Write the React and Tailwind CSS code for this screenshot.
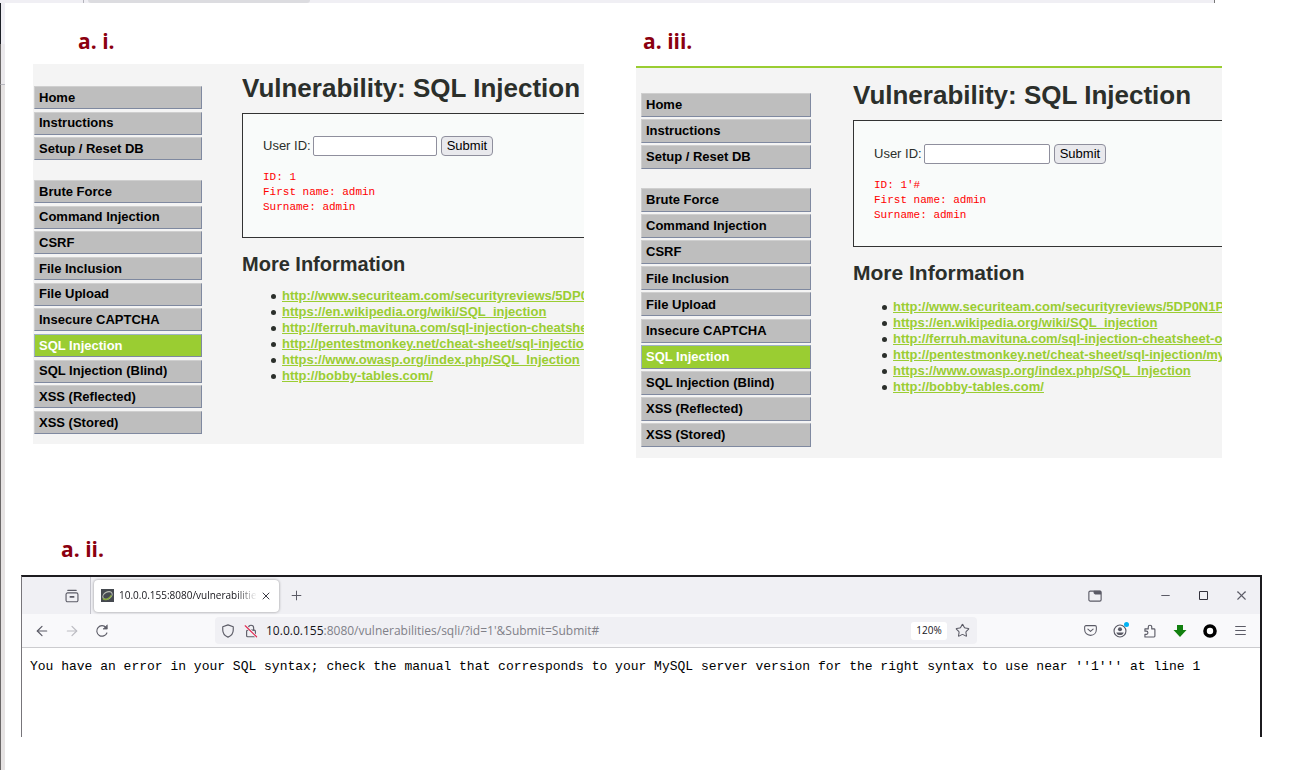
import { ArrowLeft, ArrowRight, Minus, Plus, Star, X } from 'lucide-react';

const pages = ['Home', 'Instructions', 'Setup / Reset DB'];

const attacks = [
  'Brute Force',
  'Command Injection',
  'CSRF',
  'File Inclusion',
  'File Upload',
  'Insecure CAPTCHA',
  'SQL Injection',
  'SQL Injection (Blind)',
  'XSS (Reflected)',
  'XSS (Stored)',
];

const links = [
  'http://www.securiteam.com/securityreviews/5DP0N1P76E.html',
  'https://en.wikipedia.org/wiki/SQL_injection',
  'http://ferruh.mavituna.com/sql-injection-cheatsheet-oku/',
  'http://pentestmonkey.net/cheat-sheet/sql-injection/mysql',
  'https://www.owasp.org/index.php/SQL_Injection',
  'http://bobby-tables.com/',
];

const Label = ({ children, className }) => (
  <h3 className={`font-['Open_Sans',sans-serif] font-bold text-[21px] leading-[30px] text-[#8b0010] ${className}`}>
    {children}
  </h3>
);

const NavList = ({ items, className, itemClass }) => (
  <ul className={`flex flex-col justify-between ${className}`}>
    {items.map((item) => (
      <li key={item}>
        <a
          href="#"
          className={`flex items-center pl-1 border border-r-[#7f89a0] border-b-[#7f89a0] ${itemClass} ${item === 'SQL Injection' ? 'bg-[#9acd32] text-white border-t-[#9fb3c4] border-l-[#9fb3c4]' : 'bg-[#bebebe] text-black border-t-[#cfcfcf] border-l-[#cfcfcf]'}`}
        >
          {item}
        </a>
      </li>
    ))}
  </ul>
);

const Dvwa = ({ id, result, wide }) => (
  <div
    className={`flex overflow-hidden bg-[#f4f4f4] font-['Liberation_Sans',Arial,sans-serif] text-[13px] ${wide ? 'h-[392px] border-t-2 border-[#9acd32] pl-[5px] gap-[42px]' : 'h-[380px] pl-px gap-10'}`}
  >
    <nav className={`shrink-0 font-bold flex flex-col ${wide ? 'w-[170px] pt-[25px] gap-[19px]' : 'w-[168px] pt-[22px] gap-5'}`}>
      <NavList items={pages} className={wide ? 'h-[76px]' : 'h-[74px]'} itemClass={wide ? 'h-6' : 'h-[23px]'} />
      <NavList items={attacks} className={wide ? 'h-[259px]' : 'h-[254px]'} itemClass={wide ? 'h-6' : 'h-[23px]'} />
    </nav>

    <main className={`flex-1 min-w-0 overflow-hidden whitespace-nowrap text-[#2b2f2b] ${wide ? 'pt-[11px]' : 'pt-2'}`}>
      <h1 className="font-bold text-[26px] leading-8 mb-[9px]">Vulnerability: SQL Injection</h1>

      <div className={`border border-r-0 border-[#333] bg-[#f9fbfa] px-5 ${wide ? 'py-[23px]' : 'py-[22px]'}`}>
        <form className="flex items-center" onSubmit={(e) => e.preventDefault()}>
          <label htmlFor={id}>User ID:</label>
          <input
            id={id}
            type="text"
            className={`ml-0.5 h-5 rounded-[2px] border border-[#8f8f9d] bg-white px-1 ${wide ? 'w-[126px]' : 'w-[124px]'}`}
          />
          <button type="submit" className="ml-1 h-5 rounded border border-[#8f8f9d] bg-[#e9e9ed] px-[5px] text-black leading-4">
            Submit
          </button>
        </form>
        <pre className="mt-[14px] font-['Liberation_Mono',monospace] text-[11px] leading-[15px] text-[#ff0000]">
          {`ID: ${result}\nFirst name: admin\nSurname: admin`}
        </pre>
      </div>

      <h2 className={`font-bold leading-7 mt-3 ${wide ? 'text-[21px] mb-3' : 'text-[20px] mb-[10px]'}`}>More Information</h2>
      <ul className="pl-[29px] leading-4">
        {links.map((link) => (
          <li key={link} className="flex items-center gap-[6px] before:w-[5px] before:h-[5px] before:shrink-0 before:rounded-full before:bg-[#2b2f2b]">
            <a href={link} className="font-bold text-[#9acd32] underline">{link}</a>
          </li>
        ))}
      </ul>
    </main>
  </div>
);

const IconButton = ({ label, children, className = 'w-[30px]' }) => (
  <button aria-label={label} className={`h-[30px] shrink-0 flex items-center justify-center text-[#5b5b66] ${className}`}>
    {children}
  </button>
);

const Icon = ({ children, size = 14 }) => (
  <svg width={size} height={size} viewBox="0 0 16 16" fill="none" stroke="currentColor" strokeWidth="1.3" strokeLinecap="round" strokeLinejoin="round" className="shrink-0">
    {children}
  </svg>
);

const TabBar = () => (
  <div className="h-[37px] bg-[#f0f0f4] flex items-center">
    <div className="h-full w-[69px] flex items-center justify-end pr-[3px] border-r border-[#c4c4cc]">
      <IconButton label="Recent browsing">
        <Icon>
          <path d="M3.2 1.6h9.6" />
          <path d="M1.2 6.2a1.8 1.8 0 0 1 1.8-1.8h10a1.8 1.8 0 0 1 1.8 1.8v6.6a1.8 1.8 0 0 1-1.8 1.8H3a1.8 1.8 0 0 1-1.8-1.8z" />
          <path d="M6 9h4" strokeWidth="1.8" />
        </Icon>
      </IconButton>
    </div>
    <div className="ml-[3px] w-[185px] h-8 rounded bg-white shadow-[0_0_3px_rgba(0,0,0,0.4)] flex items-center pl-[7px] pr-1">
      <svg width="13" height="13" viewBox="0 0 13 13" className="shrink-0">
        <rect width="13" height="13" fill="#45494f" />
        <ellipse cx="6.5" cy="6.5" rx="5" ry="3.4" transform="rotate(-30 6.5 6.5)" fill="none" stroke="#b9bdb4" strokeWidth="1.1" />
        <path d="M2 9.5c2 2.2 6 .8 8.4-3.2" fill="none" stroke="#86a83a" strokeWidth="1.4" />
      </svg>
      <span className="ml-[5px] flex-1 min-w-0 overflow-hidden whitespace-nowrap text-[10px] text-[#15141a] [mask-image:linear-gradient(to_right,black_85%,transparent)]">
        10.0.0.155:8080/vulnerabilities
      </span>
      <button aria-label="Close tab" className="w-[18px] h-[18px] flex items-center justify-center text-[#3a3944]">
        <X size={12} strokeWidth={2} />
      </button>
    </div>
    <IconButton label="New tab" className="w-[34px]">
      <Plus size={15} strokeWidth={1.6} />
    </IconButton>

    <div className="ml-auto mr-9">
      <IconButton label="Tab overview">
        <Icon>
          <rect x="1" y="2.4" width="14" height="11.4" rx="1.6" />
          <path d="M7 2.6h7.4v3H8.2L7 4.4z" fill="currentColor" />
        </Icon>
      </IconButton>
    </div>
    <IconButton label="Minimize" className="w-[38px]"><Minus size={13} strokeWidth={2} /></IconButton>
    <IconButton label="Maximize" className="w-[38px]">
      <svg width="9" height="9" viewBox="0 0 9 9"><path d="M.5.5h8v8h-8z" fill="none" stroke="#33323c" /></svg>
    </IconButton>
    <IconButton label="Close" className="w-[38px]"><X size={15} strokeWidth={1.7} /></IconButton>
  </div>
);

const Toolbar = () => (
  <div className="h-[34px] bg-[#f9f9fb] border-b border-[#cccccf] flex items-center px-[5px]">
    <IconButton label="Back"><ArrowLeft size={16} strokeWidth={1.8} /></IconButton>
    <IconButton label="Forward"><ArrowRight size={16} strokeWidth={1.8} className="text-[#bcbcc2]" /></IconButton>
    <IconButton label="Reload">
      <Icon>
        <path d="M13.6 10.2A6 6 0 1 1 12.6 4" />
        <path d="M14 1.4v4.4H9.6z" fill="currentColor" strokeWidth="0.8" />
      </Icon>
    </IconButton>

    <div className="flex-1 min-w-0 mx-[98px] h-[27px] rounded bg-[#f0f0f4] flex items-center">
      <div className="w-[51px] flex items-center pl-[6px] gap-[9px] text-[#5b5b66]">
        <Icon>
          <path d="M8 1l6 2.2v3.6c0 3.6-2.2 6.6-6 8.2-3.8-1.6-6-4.6-6-8.2V3.2z" />
        </Icon>
        <Icon>
          <rect x="3" y="7" width="10" height="7.6" rx="1.2" />
          <path d="M5 7V4.4a3 3 0 0 1 6 0V7" />
          <path d="M1.4 2l13 12.6" stroke="#f0f0f4" strokeWidth="3" />
          <path d="M1.4 2l13 12.6" stroke="#e22850" />
        </Icon>
      </div>
      <div className="flex-1 min-w-0 truncate text-[12px] text-[#808088]">
        <span className="text-[#15141a]">10.0.0.155</span>:8080/vulnerabilities/sqli/?id=1'&amp;Submit=Submit#
      </div>
      <button className="h-[18px] w-9 shrink-0 rounded-[3px] bg-white text-[10px] text-[#15141a]">120%</button>
      <IconButton label="Bookmark"><Star size={15} strokeWidth={1.7} /></IconButton>
    </div>

    <IconButton label="Save to Pocket">
      <Icon size={13}>
        <path d="M2.4 2h11.2a1.6 1.6 0 0 1 1.6 1.6v3.2c0 4.2-3 7.2-7.2 7.2S.8 11 .8 6.8V3.6A1.6 1.6 0 0 1 2.4 2z" />
        <path d="M4.8 6.2L8 9.2l3.2-3" />
      </Icon>
    </IconButton>
    <IconButton label="Account">
      <span className="relative">
        <Icon>
          <circle cx="8" cy="8" r="6.8" />
          <circle cx="8" cy="6" r="2.3" fill="currentColor" stroke="none" />
          <path d="M3.8 9.6h8.4c-.4 1.8-2 3-4.2 3s-3.8-1.2-4.2-3z" fill="currentColor" stroke="none" />
        </Icon>
        <span className="absolute -top-0.5 -right-0.5 w-[5px] h-[5px] rounded-full bg-[#00b3f4]" />
      </span>
    </IconButton>
    <IconButton label="Extensions">
      <Icon>
        <path d="M2.2 14.8h10.4a1 1 0 0 0 1-1V6.6a1 1 0 0 0-1-1H10V3.4a2 2 0 0 0-4 0v2.2H2.2v2.6h1.6a1.8 1.8 0 0 1 0 3.6H2.2z" />
      </Icon>
    </IconButton>
    <IconButton label="Downloads">
      <svg width="14" height="14" viewBox="0 0 14 14"><path d="M4 1h6v5h3.5L7 13 .5 6H4z" fill="#12800f" /></svg>
    </IconButton>
    <IconButton label="Proxy">
      <svg width="14" height="14" viewBox="0 0 14 14"><circle cx="7" cy="7" r="5" fill="#fff" stroke="#000" strokeWidth="3.6" /></svg>
    </IconButton>
    <IconButton label="Menu">
      <Icon size={13}>
        <path d="M2 3h12M2 8h12M2 13h12" />
      </Icon>
    </IconButton>
  </div>
);

const App = () => {
  return (
    <div className="min-h-screen flex flex-col bg-white font-['Open_Sans',sans-serif]">
      {/* slice of the window behind */}
      <div className="h-[3px] mr-[79px] bg-[#f0eff4] border-r border-[#777] flex">
        <div className="w-[84px] border-r border-[#b5b5bd]" />
        <div className="ml-1 w-[222px] h-[3px] rounded-b bg-[#dcdce0]" />
      </div>

      <div className="flex-1 flex">
        <div className="w-[5px] shrink-0 flex flex-col">
          <div className="h-[41px] bg-[#f0eff4] border-l border-[#1c2026]" />
          <div className="h-[41px] bg-[#ebe9ec] border-l border-b border-l-[#6b6868] border-b-[#b9b9c0]" />
          <div className="flex-1 bg-[#e6e3e3] border-l border-[#6b6868]" />
        </div>

        <div className="flex-1 min-w-0">
          <div className="pt-[23px] pl-7 pr-[72px] grid grid-cols-[551fr_586fr] gap-[52px] items-start">
            <section className="min-w-0">
              <Label className="pl-[45px] mb-2">a. i.</Label>
              <Dvwa id="user-id-1" result="1" />
            </section>
            <section className="min-w-0">
              <Label className="pl-[7px] mb-[10px]">a. iii.</Label>
              <Dvwa id="user-id-2" result="1'#" wide />
            </section>
          </div>

          <section className="mt-[76px] pl-4 pr-8">
            <Label className="pl-10 mb-[11px]">a. ii.</Label>
            <div className="border-t-2 border-r-2 border-l border-t-[#1c1b1f] border-r-[#1c1b1f] border-l-[#77757a] h-[162px] bg-white">
              <TabBar />
              <Toolbar />
              <p className="px-2 pt-[9px] overflow-hidden whitespace-nowrap font-['Liberation_Mono',monospace] text-[13px] leading-5 text-black">
                You have an error in your SQL syntax; check the manual that corresponds to your MySQL server version for the right syntax to use near ''1''' at line 1
              </p>
            </div>
          </section>
        </div>
      </div>
    </div>
  );
};

export default App;
